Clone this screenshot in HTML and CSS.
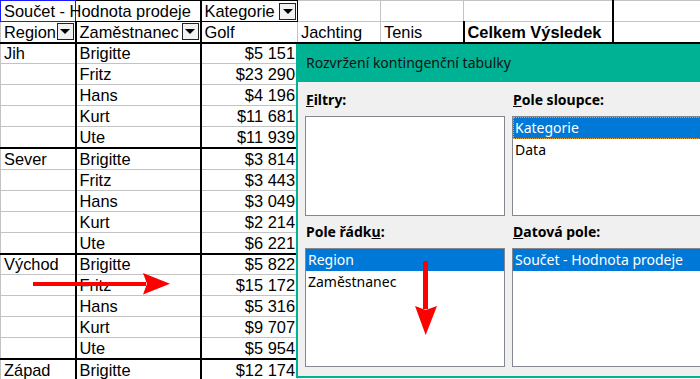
FILE: index.html
```html
<!DOCTYPE html>
<html lang="cs">
<head>
<meta charset="utf-8"/>
<title>Rozvržení kontingenční tabulky</title>
<link rel="stylesheet" href="styles.css">
</head>
<body>
<div class="page">
<!-- List s kontingenční tabulkou -->
<table class="sheet">
<colgroup>
<col style="width:75px"><col style="width:125px"><col style="width:97px"><col style="width:83px"><col style="width:83px"><col style="width:149px"><col style="width:88px">
</colgroup>
<tr>
<td class="cursor">Součet - Hodnota prodeje</td>
<td class="tk bk r2"></td>
<td class="tk bk rk"><div class="dd-cell"><span>Kategorie</span><span class="dd"></span></div></td>
<td></td><td></td><td class="r2"></td><td></td>
</tr>
<tr class="head">
<td class="r2"><div class="dd-cell"><span>Region</span><span class="dd"></span></div></td>
<td class="r2"><div class="dd-cell"><span>Zaměstnanec</span><span class="dd"></span></div></td>
<td>Golf</td><td>Jachting</td><td class="r2">Tenis</td><td class="r2 bold">Celkem Výsledek</td><td></td>
</tr>
<tr class="grp"><td class="r2">Jih</td><td class="r2">Brigitte</td><td class="num">$5 151</td><td colspan="4"></td></tr>
<tr><td class="r2"></td><td class="r2">Fritz</td><td class="num">$23 290</td><td colspan="4"></td></tr>
<tr><td class="r2"></td><td class="r2">Hans</td><td class="num">$4 196</td><td colspan="4"></td></tr>
<tr><td class="r2"></td><td class="r2">Kurt</td><td class="num">$11 681</td><td colspan="4"></td></tr>
<tr><td class="r2"></td><td class="r2">Ute</td><td class="num">$11 939</td><td colspan="4"></td></tr>
<tr class="grp"><td class="r2">Sever</td><td class="r2">Brigitte</td><td class="num">$3 814</td><td colspan="4"></td></tr>
<tr><td class="r2"></td><td class="r2">Fritz</td><td class="num">$3 443</td><td colspan="4"></td></tr>
<tr><td class="r2"></td><td class="r2">Hans</td><td class="num">$3 049</td><td colspan="4"></td></tr>
<tr><td class="r2"></td><td class="r2">Kurt</td><td class="num">$2 214</td><td colspan="4"></td></tr>
<tr><td class="r2"></td><td class="r2">Ute</td><td class="num">$6 221</td><td colspan="4"></td></tr>
<tr class="grp"><td class="r2">Východ</td><td class="r2">Brigitte</td><td class="num">$5 822</td><td colspan="4"></td></tr>
<tr><td class="r2"></td><td class="r2">Fritz</td><td class="num">$15 172</td><td colspan="4"></td></tr>
<tr><td class="r2"></td><td class="r2">Hans</td><td class="num">$5 316</td><td colspan="4"></td></tr>
<tr><td class="r2"></td><td class="r2">Kurt</td><td class="num">$9 707</td><td colspan="4"></td></tr>
<tr><td class="r2"></td><td class="r2">Ute</td><td class="num">$5 954</td><td colspan="4"></td></tr>
<tr class="grp"><td class="r2">Západ</td><td class="r2">Brigitte</td><td class="num">$12 174</td><td colspan="4"></td></tr>
</table>

<!-- Dialog -->
<div class="dialog">
<div class="dialog-title">Rozvržení kontingenční tabulky</div>
<div class="dialog-body">
<div class="label"><u>F</u>iltry:</div>
<div class="label"><u>P</u>ole sloupce:</div>
<div class="list"></div>
<div class="list">
<div class="item sel focus">Kategorie</div>
<div class="item">Data</div>
</div>
<div class="label">Pole řádk<u>u</u>:</div>
<div class="label"><u>D</u>atová pole:</div>
<div class="list">
<div class="item sel">Region</div>
<div class="item">Zaměstnanec</div>
</div>
<div class="list">
<div class="item sel">Součet - Hodnota prodeje</div>
</div>
</div>
</div>

<!-- Červené šipky -->
<svg class="arrows" width="700" height="379" viewBox="0 0 700 379">
<rect x="33" y="282" width="113" height="4" fill="#f00"/>
<polygon points="143,273 170,283.8 143,294.5 147,283.8" fill="#f00"/>
<rect x="423" y="261" width="5" height="48" fill="#f00"/>
<polygon points="415,306 425.7,310 437,306 425.7,335" fill="#f00"/>
</svg>
</div>
</body>
</html>
```

FILE: styles.css
```css
body {
  margin: 0;
  background: #fff;
  font-family: "Liberation Sans", Arial, sans-serif;
  color: #000;
}

.page {
  width: 700px;
  height: 379px;
  overflow: hidden;
  position: relative;
}

/* tabulka */
.sheet {
  border-collapse: collapse;
  table-layout: fixed;
  width: 700px;
  font-size: 16.4px;
}

.sheet tr {
  height: 21px;
}

.sheet td {
  height: 20px;
  padding: 0 3px;
  border: 1px solid #c3c3c3;
  white-space: nowrap;
  line-height: 18px;
  vertical-align: middle;
  overflow: visible;
}

.sheet tr.grp td,
.sheet tr.head td {
  height: 19px;
}

.sheet td.num {
  text-align: right;
  padding-right: 2px;
}

.sheet td.bold {
  font-weight: bold;
}

.sheet td.cursor {
  border: 1px solid #1a1aff;
}

.sheet td.tk {
  border-top: 1px solid #000;
}

.sheet td.bk {
  border-bottom: 1px solid #000;
}

.sheet td.rk {
  border-right: 1px solid #000;
}

.sheet td.r2 {
  border-right: 2px solid #000;
}

.sheet tr.head td {
  border-bottom: 2px solid #000;
}

.sheet tr.grp td {
  border-top: 2px solid #000;
}

.dd-cell {
  display: flex;
  justify-content: space-between;
  align-items: center;
  height: 18px;
}

.dd {
  width: 15px;
  height: 15px;
  border: 1px solid #222;
  background: #f2f2f2;
  margin-right: -2px;
  display: flex;
  justify-content: center;
  align-items: center;
}

.dd::after {
  content: "";
  border-left: 5px solid transparent;
  border-right: 5px solid transparent;
  border-top: 5px solid #000;
}

/* dialog */
.dialog {
  position: absolute;
  left: 296px;
  top: 44px;
  width: 470px;
  border-left: 2px solid #00b294;
  border-bottom: 2px solid #00b294;
  font-family: "Noto Sans", "Open Sans", sans-serif;
  font-size: 14px;
}

.dialog-title {
  height: 38px;
  line-height: 38px;
  padding-left: 8px;
  background: #00b294;
  color: #111;
}

.dialog-body {
  height: 294px;
  box-sizing: border-box;
  padding: 8px 7px 0;
  background: #f0f0f0;
  display: grid;
  grid-template-columns: 200px 240px;
  grid-template-rows: 20px 100px 20px 119px;
  column-gap: 7px;
  row-gap: 6px;
}

.label {
  font-weight: bold;
  line-height: 20px;
  padding-left: 1px;
}

.list {
  background: #fff;
  border: 1px solid #828790;
  box-sizing: border-box;
}

.item {
  height: 22px;
  line-height: 22px;
  padding-left: 2px;
  white-space: nowrap;
}

.item.sel {
  background: #0078d7;
  color: #fff;
}

.item.focus {
  outline: 1px dotted #e8a040;
  outline-offset: -1px;
}

.arrows {
  position: absolute;
  left: 0;
  top: 0;
  pointer-events: none;
}
```
